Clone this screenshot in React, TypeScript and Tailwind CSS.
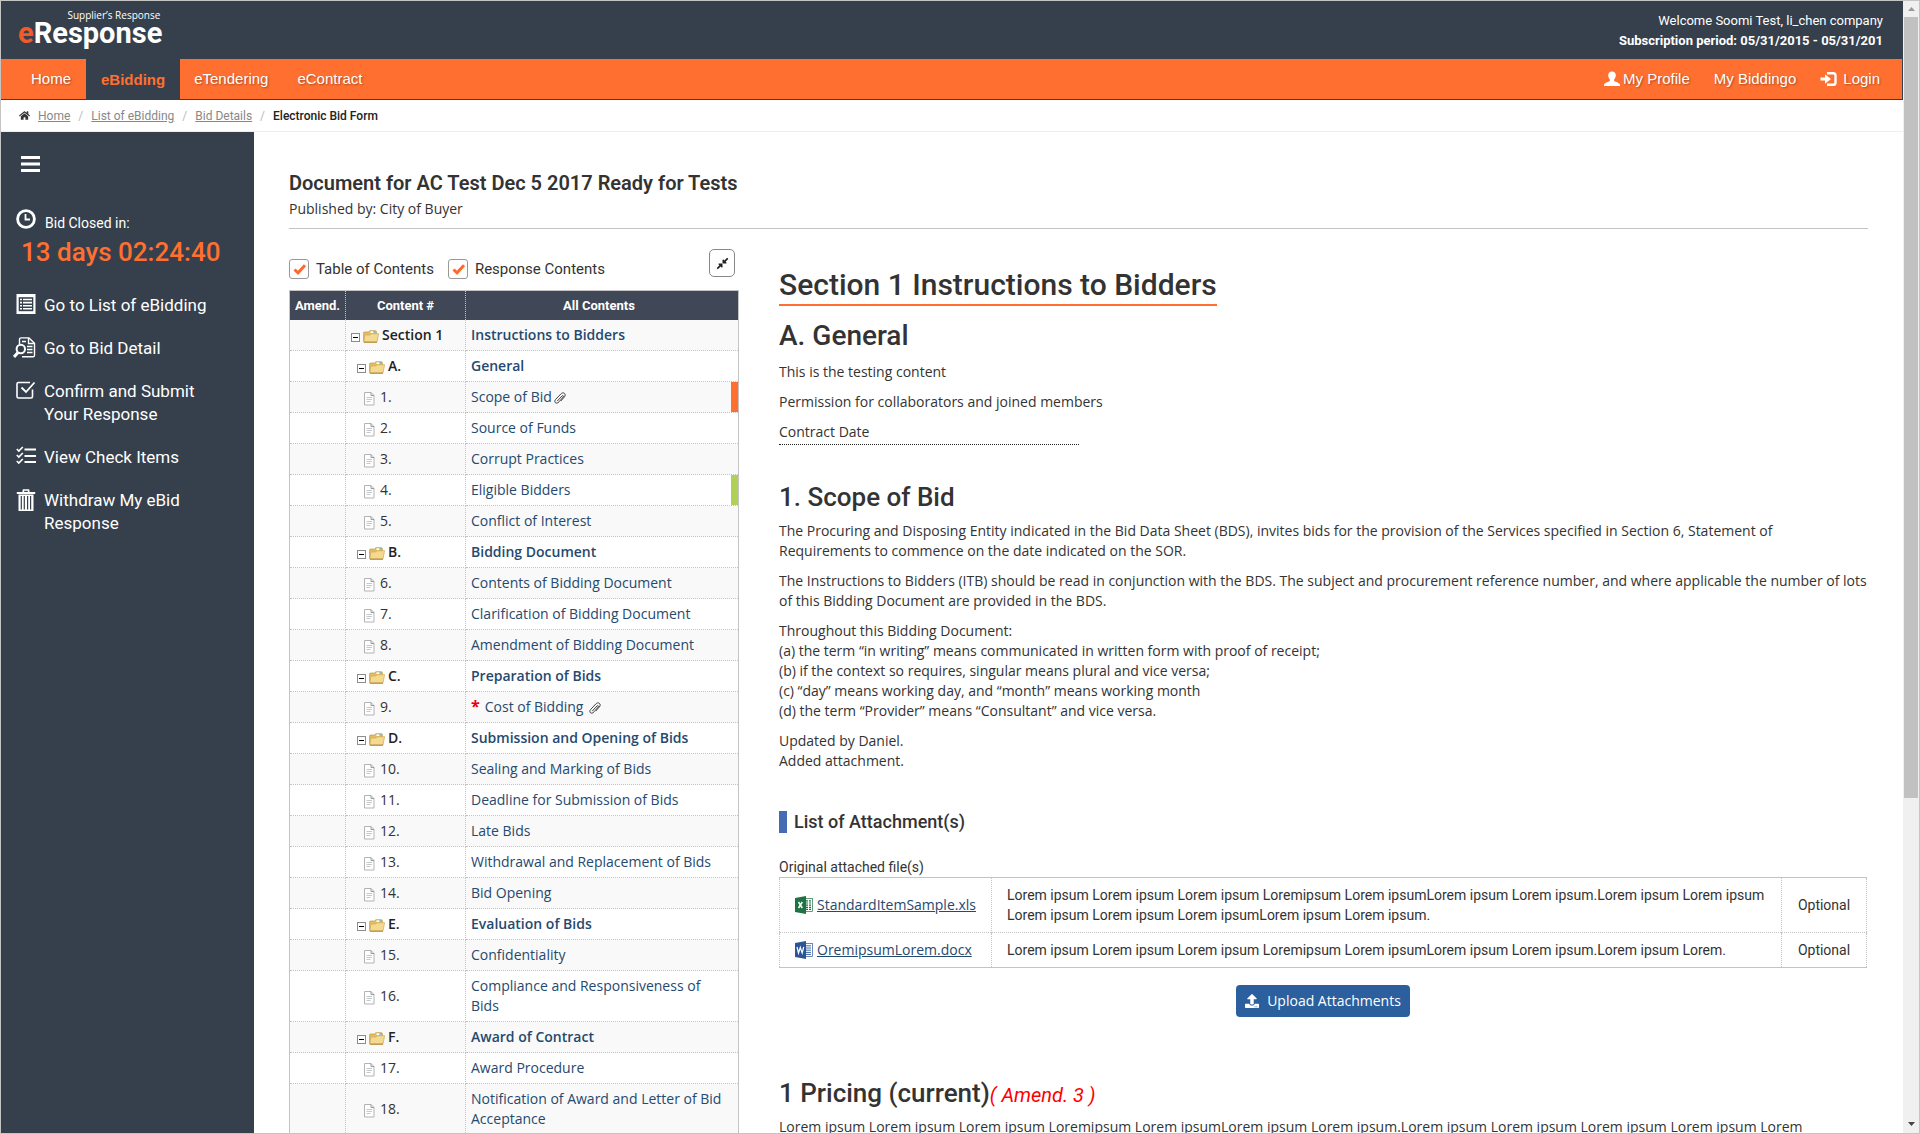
import type { ReactNode } from "react";
import { FaHome, FaUpload, FaCompressAlt } from "react-icons/fa";

type Row = {
  kind: "section" | "group" | "item";
  no: string;
  title: string;
  mark?: "orange" | "green";
  clip?: boolean;
  required?: boolean;
};

const rows: Row[] = [
  { kind: "section", no: "Section 1", title: "Instructions to Bidders" },
  { kind: "group", no: "A.", title: "General" },
  { kind: "item", no: "1.", title: "Scope of Bid", mark: "orange", clip: true },
  { kind: "item", no: "2.", title: "Source of Funds" },
  { kind: "item", no: "3.", title: "Corrupt Practices" },
  { kind: "item", no: "4.", title: "Eligible Bidders", mark: "green" },
  { kind: "item", no: "5.", title: "Conflict of Interest" },
  { kind: "group", no: "B.", title: "Bidding Document" },
  { kind: "item", no: "6.", title: "Contents of Bidding Document" },
  { kind: "item", no: "7.", title: "Clarification of Bidding Document" },
  { kind: "item", no: "8.", title: "Amendment of Bidding Document" },
  { kind: "group", no: "C.", title: "Preparation of Bids" },
  { kind: "item", no: "9.", title: "Cost of Bidding", clip: true, required: true },
  { kind: "group", no: "D.", title: "Submission and Opening of Bids" },
  { kind: "item", no: "10.", title: "Sealing and Marking of Bids" },
  { kind: "item", no: "11.", title: "Deadline for Submission of Bids" },
  { kind: "item", no: "12.", title: "Late Bids" },
  { kind: "item", no: "13.", title: "Withdrawal and Replacement of Bids" },
  { kind: "item", no: "14.", title: "Bid Opening" },
  { kind: "group", no: "E.", title: "Evaluation of Bids" },
  { kind: "item", no: "15.", title: "Confidentiality" },
  { kind: "item", no: "16.", title: "Compliance and Responsiveness of Bids" },
  { kind: "group", no: "F.", title: "Award of Contract" },
  { kind: "item", no: "17.", title: "Award Procedure" },
  { kind: "item", no: "18.", title: "Notification of Award and Letter of Bid Acceptance" },
];

function UserIcon() {
  return (
    <svg width="16" height="16" viewBox="0 0 16 16" fill="currentColor" aria-hidden="true">
      <path d="M8 0.5c2.4 0 3.8 1.6 3.8 3.8 0 1.7-.7 3.200-1.700 4.200v1.300c.3.500 1.100.8 2.300 1.300 2.300.9 3.400 1.600 3.600 2.700V15H0v-1.200c.2-1.100 1.300-1.800 3.600-2.700 1.200-.5 2-.8 2.300-1.300V8.500C4.900 7.500 4.200 6 4.200 4.300 4.200 2.100 5.600.5 8 .5z" />
    </svg>
  );
}

function LoginIcon() {
  return (
    <svg width="18" height="16" viewBox="0 0 18 16" fill="none" aria-hidden="true">
      <path d="M7 2.200h6.200c1.300 0 2.300 1 2.300 2.300v7c0 1.300-1 2.300-2.300 2.300H7" stroke="currentColor" strokeWidth="2.400" />
      <path d="M0.500 6.400h4.500V3.200L11 8l-6 4.800V9.600H0.500z" fill="currentColor" />
    </svg>
  );
}

function MenuIcon() {
  return (
    <svg width="20" height="16" viewBox="0 0 20 16" fill="#fff" aria-hidden="true">
      <rect width="19" height="3" x="0" y="0" />
      <rect width="19" height="3" x="0" y="6.500" />
      <rect width="19" height="3" x="0" y="13" />
    </svg>
  );
}

function ClockIcon() {
  return (
    <svg width="20" height="20" viewBox="0 0 20 20" fill="none" stroke="#fff" aria-hidden="true">
      <circle cx="10" cy="10" r="8.400" strokeWidth="2.800" />
      <path d="M9.500 5v5.500h4.500" strokeWidth="1.800" />
    </svg>
  );
}

function ListIcon() {
  return (
    <svg width="20" height="20" viewBox="0 0 20 20" aria-hidden="true">
      <rect x="0.500" width="19" height="20" fill="#fff" />
      <rect x="2.700" y="3.200" width="14.600" height="14" fill="#36404c" />
      <g fill="#fff">
        <path d="M4 4.700h2v1.600H4zM7 4.700h9v1.600H7zM4 7.800h2v1.600H4zM7 7.800h9v1.600H7zM4 10.900h2v1.600H4zM7 10.900h9v1.600H7zM4 14h2v1.600H4zM7 14h9v1.600H7z" />
      </g>
    </svg>
  );
}

function DetailIcon() {
  return (
    <svg width="23" height="21" viewBox="0 0 23 21" fill="none" stroke="#fff" strokeWidth="1.400" aria-hidden="true">
      <path d="M6.500 7V2.500c0-1 .6-1.600 1.600-1.600H16l5.500 5.300v12c0 1-.6 1.600-1.600 1.600H9" />
      <path d="M15.500 1v5.500h6M9 4.500h4M14 9.500h5.500M14 12.500h5.500M14 15.500h5.500" />
      <circle cx="7.800" cy="12" r="4.200" strokeWidth="2" />
      <path d="M5 15.500 1 20" strokeWidth="3" />
    </svg>
  );
}

function ConfirmIcon() {
  return (
    <svg width="20" height="20" viewBox="0 0 20 20" fill="none" stroke="#fff" strokeWidth="1.600" aria-hidden="true">
      <path d="M14 2.500H2.500c-1 0-1.500.5-1.500 1.500v12.500c0 1 .5 1.500 1.500 1.500H15c1 0 1.500-.5 1.500-1.500V9.500" />
      <path d="M5.500 7.500 10 12l8.500-9.500" strokeWidth="1.800" />
    </svg>
  );
}

function ChecklistIcon() {
  return (
    <svg width="20" height="18" viewBox="0 0 20 18" fill="none" stroke="#fff" aria-hidden="true">
      <path d="M8.500 3.500H20M8.500 10H20M8.500 16H20" strokeWidth="1.900" />
      <path d="M.8 3l2 2L6.800 1M.8 9l2 2 4-4M.8 15l2 2 4-4" strokeWidth="1.700" />
    </svg>
  );
}

function TrashIcon() {
  return (
    <svg width="20" height="22" viewBox="0 0 20 22" fill="#fff" aria-hidden="true">
      <path d="M6.500 3V1.500C6.500.6 7 .2 7.800.2h4.400c.8 0 1.300.4 1.300 1.300V3h5.700v2H.8V3zM8.200 3h3.600V1.700H8.200z" />
      <path fillRule="evenodd" d="M2.500 5.500h15V22h-15zM4.700 7v13.500h1.200V7zM7.700 7v13.500h1.200V7zM11 7v13.500h1.200V7zM14 7v13.500h1.200V7z" />
    </svg>
  );
}

function ToggleBox() {
  return (
    <button type="button" aria-label="Collapse" className="mt-1 flex size-[9px] items-center justify-center border border-[#8c8c8c] bg-white">
      <span className="h-px w-[5px] bg-black" />
    </button>
  );
}

function FolderIcon() {
  return (
    <svg width="16" height="14" viewBox="0 0 16 14" className="mt-[2px]" aria-hidden="true">
      <path d="M.6 12.800V4c0-.6.300-1 1-1h4.200l.9-1.300h5.700c.6 0 1 .4 1 1v10z" fill="#e3bd62" stroke="#c09a4a" strokeWidth=".7" />
      <path d="M7.500 2.300h4v1.800h-4z" fill="#fff" />
      <path d="M10.300 2.200h2v1.500h-2z" fill="#5ab4e6" />
      <path d="M.8 13 1.900 6h5L8.200 4.700h7.400L14 13z" fill="#f4da90" stroke="#cfa954" strokeWidth=".7" />
      <path d="M1 13.200h13" stroke="#a67c2b" strokeWidth=".9" />
    </svg>
  );
}

function PageIcon() {
  return (
    <svg width="11" height="14" viewBox="0 0 11 14" fill="none" className="mt-1" aria-hidden="true">
      <path d="M.5 .5h6.500l3 3v9.500H.5z" fill="#fff" stroke="#b3b3b3" />
      <path d="M7 .5v3h3" stroke="#9a9a9a" />
      <path d="M2.500 5.500H8M2.500 7.500H8M2.500 9.500h4" stroke="#c2c8cc" />
    </svg>
  );
}

function ClipIcon() {
  return (
    <svg width="12" height="12" viewBox="0 0 12 12" fill="none" stroke="#444" strokeWidth="1" strokeLinecap="round" className="inline-block align-[-2px]" aria-hidden="true">
      <path d="M3.500 8.800 8 4c.9-.9 2 .1 1.200 1L5 9.800c-1.300 1.500-2.700 1.700-3.600.9-.9-.9-.7-2.200.3-3.300L6.800 2c1.200-1.300 2.700-1.500 3.700-.6 1 .9.9 2.400-.2 3.600L7 8.800" />
    </svg>
  );
}

function FileIcon({ kind }: { kind: "xls" | "doc" }) {
  const tone = kind === "xls" ? "#1f7244" : "#2a5699";
  return (
    <svg width="18" height="18" viewBox="0 0 18 18" className="shrink-0" aria-hidden="true">
      <rect x="9" y="2.500" width="8.500" height="13" fill="#fff" stroke={tone} strokeWidth=".7" />
      {kind === "xls" ? (
        <path d="M11 4.800h2M14 4.800h2M11 7h2M14 7h2M11 9.200h2M14 9.200h2M11 11.400h2M14 11.400h2M11 13.400h2M14 13.400h2" stroke={tone} strokeWidth="1.200" />
      ) : (
        <path d="M11 4.800h5M11 7h5M11 9.200h5M11 11.400h5M11 13.400h5" stroke={tone} strokeWidth=".9" />
      )}
      <path d="M0 2 11 0v18L0 16z" fill={tone} />
      {kind === "xls" ? (
        <path d="M3.500 6 7.300 12M7.300 6 3.500 12" stroke="#fff" strokeWidth="1.500" />
      ) : (
        <path d="M2 6l1.500 6L5.300 6.500 7.200 12 8.700 6" stroke="#fff" strokeWidth="1.200" fill="none" />
      )}
    </svg>
  );
}

const tab = "flex items-center text-[15px] text-white [text-shadow:1px_1px_2px_rgba(0,0,0,0.35)]";

function Header() {
  return (
    <header>
      <div className="flex h-[58px] items-start justify-between bg-[#36404c] pr-5 pl-[17px] font-['Roboto',sans-serif] text-white">
        <div className="flex flex-col items-end pt-2">
          <span className="pr-[2px] font-['Open_Sans',sans-serif] text-[10px] leading-3">Supplier’s Response</span>
          <span className="text-[29px] leading-6 font-bold">
            <span className="text-[#f15a29]">e</span>Response
          </span>
        </div>
        <div className="pt-[10px] text-right text-[13px] leading-5">
          <p>Welcome Soomi Test, li_chen company</p>
          <p className="font-bold">Subscription period: 05/31/2015 - 05/31/201</p>
        </div>
      </div>
      <nav className="flex h-[41px] justify-between border-r border-b border-[#36404c] bg-[#ff7030] pr-[22px] pl-[15px] font-['Liberation_Sans',Arial,sans-serif]">
        <div className="flex">
          <a href="#home" className={`${tab} px-[15px]`}>Home</a>
          <a href="#ebidding" className="flex items-center bg-[#36404c] px-[15px] pt-[2px] text-[15px] font-bold text-[#ff7030]">eBidding</a>
          <a href="#etendering" className={`${tab} px-[14px]`}>eTendering</a>
          <a href="#econtract" className={`${tab} px-[15px]`}>eContract</a>
        </div>
        <div className="flex gap-6">
          <a href="#profile" className={`${tab} gap-[3px]`}><UserIcon />My Profile</a>
          <a href="#biddingo" className={tab}>My Biddingo</a>
          <a href="#login" className={`${tab} gap-[5px]`}><LoginIcon />Login</a>
        </div>
      </nav>
      <ol className="flex h-8 items-center gap-2 border-b border-[#eee] pl-[18px] font-['Roboto',sans-serif] text-xs text-[#bbb]">
        <li className="text-[#333]"><FaHome className="size-[11px]" /></li>
        <li><a href="#home" className="text-[#888] underline">Home</a></li>
        <li aria-hidden="true">/</li>
        <li><a href="#list" className="text-[#888] underline">List of eBidding</a></li>
        <li aria-hidden="true">/</li>
        <li><a href="#details" className="text-[#888] underline">Bid Details</a></li>
        <li aria-hidden="true">/</li>
        <li className="font-medium text-[#222]">Electronic Bid Form</li>
      </ol>
    </header>
  );
}

function SideLink({ icon, children }: { icon: ReactNode; children: ReactNode }) {
  return (
    <li>
      <a href="#" className="flex items-start gap-2">
        <span className="flex w-[23px] shrink-0 justify-end">{icon}</span>
        <span>{children}</span>
      </a>
    </li>
  );
}

function Sidebar() {
  return (
    <aside className="w-[253px] shrink-0 bg-[#36404c] pt-6 pl-3 font-['Roboto',sans-serif] text-white">
      <button type="button" aria-label="Menu" className="ml-2 block"><MenuIcon /></button>
      <div className="mt-[37px] ml-[3px] flex items-start gap-[9px]">
        <ClockIcon />
        <span className="pt-1 text-sm leading-5">Bid Closed in:</span>
      </div>
      <p className="mt-px ml-2 text-[26px] leading-9 font-medium text-[#ff7030]">13 days 02:24:40</p>
      <ul className="mt-6 flex flex-col gap-5 text-[17px] leading-[23px]">
        <SideLink icon={<ListIcon />}>Go to List of eBidding</SideLink>
        <SideLink icon={<DetailIcon />}>Go to Bid Detail</SideLink>
        <SideLink icon={<ConfirmIcon />}>Confirm and Submit<br />Your Response</SideLink>
        <SideLink icon={<ChecklistIcon />}>View Check Items</SideLink>
        <SideLink icon={<TrashIcon />}>Withdraw My eBid<br />Response</SideLink>
      </ul>
    </aside>
  );
}

function CheckBox({ id, label }: { id: string; label: string }) {
  return (
    <label htmlFor={id} className="flex items-center gap-[7px]">
      <span className="relative size-5">
        <input id={id} type="checkbox" defaultChecked className="block size-5 appearance-none rounded-[3px] border border-[#999] bg-white" />
        <svg width="14" height="12" viewBox="0 0 14 12" className="pointer-events-none absolute top-1 left-1" aria-hidden="true">
          <path d="M1.500 6.500 5 9.800 12 2.200" fill="none" stroke="#ff6a2b" strokeWidth="3" />
        </svg>
      </span>
      {label}
    </label>
  );
}

const dotted = "border-b border-dotted border-[#c4c4c4]";

function ContentsPanel() {
  return (
    <section className="w-[450px] shrink-0">
      <div className="flex justify-between pr-1">
        <div className="flex gap-[14px] pt-[10px] font-['Roboto',sans-serif] text-[15px] leading-5">
          <CheckBox id="toc" label="Table of Contents" />
          <CheckBox id="resp" label="Response Contents" />
        </div>
        <button type="button" aria-label="Collapse all" className="flex h-7 w-[26px] items-center justify-center rounded-[5px] border border-[#888] bg-white text-[#222]">
          <FaCompressAlt className="size-[13px]" />
        </button>
      </div>
      <table className="mt-[11px] w-full table-fixed border-separate border-spacing-0 border border-[#c4c4c4] text-sm leading-5">
        <thead>
          <tr className="h-[29px] bg-[#404756] font-['Roboto',sans-serif] text-[13px] text-white">
            <th className="w-[56px] border-r border-dotted border-[#c4c4c4] font-bold">Amend.</th>
            <th className="w-[120px] border-r border-dotted border-[#c4c4c4] font-bold">Content #</th>
            <th className="pr-[6px] font-bold">All Contents</th>
          </tr>
        </thead>
        <tbody>
          {rows.map((r) => (
            <tr key={r.no} className="odd:bg-[#f9f9f9]">
              <td className={`${dotted} border-r`} />
              <td className={`${dotted} border-r px-[5px] py-[5px]`}>
                {r.kind === "item" ? (
                  <span className="flex items-center gap-[5px] pl-[13px]"><PageIcon />{r.no}</span>
                ) : (
                  <span className={r.kind === "group" ? "flex items-center gap-[3px] pl-[6px] font-semibold text-[#222]" : "flex items-center gap-[3px] font-semibold text-[#222]"}>
                    <ToggleBox /><FolderIcon />{r.no}
                  </span>
                )}
              </td>
              <td className={`${dotted} relative py-[5px] pr-2 pl-[5px]`}>
                {r.required && <span className="mr-[5px] text-base leading-4 font-bold text-red-600">*</span>}
                <a href="#" className={r.kind === "item" ? "text-[#25496f]" : "font-semibold text-[#25496f]"}>{r.title}</a>
                {r.clip && <span className={r.required ? "ml-[6px]" : "ml-[2px]"}><ClipIcon /></span>}
                {r.mark && <span className={r.mark === "orange" ? "absolute inset-y-0 right-0 w-[7px] bg-[#ff7030]" : "absolute inset-y-0 right-0 w-[7px] bg-[#b0d157]"} />}
              </td>
            </tr>
          ))}
        </tbody>
      </table>
    </section>
  );
}

const files = [
  {
    kind: "xls" as const,
    name: "StandardItemSample.xls",
    note: "Lorem ipsum Lorem ipsum Lorem ipsum Loremipsum Lorem ipsumLorem ipsum Lorem ipsum.Lorem ipsum Lorem ipsum Lorem ipsum Lorem ipsum Lorem ipsumLorem ipsum Lorem ipsum.",
  },
  {
    kind: "doc" as const,
    name: "OremipsumLorem.docx",
    note: "Lorem ipsum Lorem ipsum Lorem ipsum Loremipsum Lorem ipsumLorem ipsum Lorem ipsum.Lorem ipsum Lorem.",
  },
];

function Article() {
  return (
    <article className="min-w-0 flex-1 pt-4 pr-px text-sm leading-5">
      <h1 className="inline-block border-b-2 border-[#ff7030] font-['Roboto',sans-serif] text-[30px] leading-[39px] font-medium">Section 1 Instructions to Bidders</h1>
      <h2 className="mt-3 font-['Roboto',sans-serif] text-[28px] leading-9 font-medium">A. General</h2>
      <div className="mt-2 flex flex-col gap-[10px]">
        <p>This is the testing content</p>
        <p>Permission for collaborators and joined members</p>
        <p className="w-[300px] border-b border-dotted border-[#222] pb-[2px]">Contract Date</p>
      </div>
      <h2 className="mt-[34px] font-['Roboto',sans-serif] text-[26px] leading-9 font-medium">1. Scope of Bid</h2>
      <div className="mt-[6px] flex flex-col gap-[10px]">
        <p>The Procuring and Disposing Entity indicated in the Bid Data Sheet (BDS), invites bids for the provision of the Services specified in Section 6, Statement of Requirements to commence on the date indicated on the SOR.</p>
        <p>The Instructions to Bidders (ITB) should be read in conjunction with the BDS. The subject and procurement reference number, and where applicable the number of lots of this Bidding Document are provided in the BDS.</p>
        <p>
          Throughout this Bidding Document:<br />
          (a) the term “in writing” means communicated in written form with proof of receipt;<br />
          (b) if the context so requires, singular means plural and vice versa;<br />
          (c) “day” means working day, and “month” means working month<br />
          (d) the term “Provider” means “Consultant” and vice versa.
        </p>
        <p>Updated by Daniel.<br />Added attachment.</p>
      </div>
      <h3 className="mt-10 border-l-8 border-[#446bb3] pl-[7px] font-['Roboto',sans-serif] text-lg leading-[22px] font-medium">List of Attachment(s)</h3>
      <p className="mt-6 font-['Roboto',sans-serif] text-sm leading-5">Original attached file(s)</p>
      <table className="w-full border-collapse border border-dotted border-[#c4c4c4] font-['Roboto',sans-serif] text-sm leading-5">
        <tbody className="border-y border-solid border-[#c4c4c4]">
          {files.map((f) => (
            <tr key={f.name} className="border-b border-dotted border-[#c4c4c4]">
              <td className="w-[212px] border-r border-dotted border-[#c4c4c4] px-[15px] py-[7px]">
                <a href="#" className="flex items-center gap-1 font-['Open_Sans',sans-serif] text-[#25496f] underline">
                  <FileIcon kind={f.kind} />{f.name}
                </a>
              </td>
              <td className="border-r border-dotted border-[#c4c4c4] px-[15px] py-[7px]">{f.note}</td>
              <td className="w-[85px] py-[7px] text-center">Optional</td>
            </tr>
          ))}
        </tbody>
      </table>
      <button type="button" className="mx-auto mt-[17px] flex h-8 items-center gap-2 rounded bg-[#2b5f9e] px-[9px] font-['Open_Sans',sans-serif] text-sm text-white">
        <FaUpload className="size-[14px]" />Upload Attachments
      </button>
      <h2 className="mt-[58px] font-['Roboto',sans-serif] text-[26px] leading-9 font-medium">
        1 Pricing (current)<em className="text-xl font-normal text-[#f00]">( Amend. 3 )</em>
      </h2>
      <p className="mt-[6px]">Lorem ipsum Lorem ipsum Lorem ipsum Loremipsum Lorem ipsumLorem ipsum Lorem ipsum.Lorem ipsum Lorem ipsum Lorem ipsum Lorem ipsum Lorem</p>
    </article>
  );
}

function ScrollBar() {
  return (
    <div className="flex w-4 shrink-0 flex-col items-center bg-[#f0f0f0]" aria-hidden="true">
      <svg width="16" height="16" viewBox="0 0 16 16" className="shrink-0"><path d="M5 10h7L8.500 6z" fill="#999" /></svg>
      <div className="flex w-full flex-1 flex-col items-center">
        <div className="h-[71%] w-[14px] bg-[#c1c1c1]" />
      </div>
      <svg width="16" height="16" viewBox="0 0 16 16" className="shrink-0"><path d="M5 5h7l-3.500 4z" fill="#444" /></svg>
    </div>
  );
}

export default function App() {
  return (
    <div className="flex h-screen overflow-hidden border border-[#c4c4c4] bg-white font-['Open_Sans',sans-serif] text-[#333]">
      <div className="flex min-w-0 flex-1 flex-col overflow-hidden">
        <Header />
        <div className="flex min-h-0 flex-1">
          <Sidebar />
          <main className="min-w-0 flex-1 overflow-hidden px-[35px] pt-[39px]">
            <h1 className="font-['Roboto',sans-serif] text-xl leading-6 font-semibold">Document for AC Test Dec 5 2017 Ready for Tests</h1>
            <p className="mt-1 border-b border-[#c4c4c4] pb-[9px] text-sm leading-5">Published by: City of Buyer</p>
            <div className="mt-5 flex gap-10">
              <ContentsPanel />
              <Article />
            </div>
          </main>
        </div>
      </div>
      <ScrollBar />
    </div>
  );
}
